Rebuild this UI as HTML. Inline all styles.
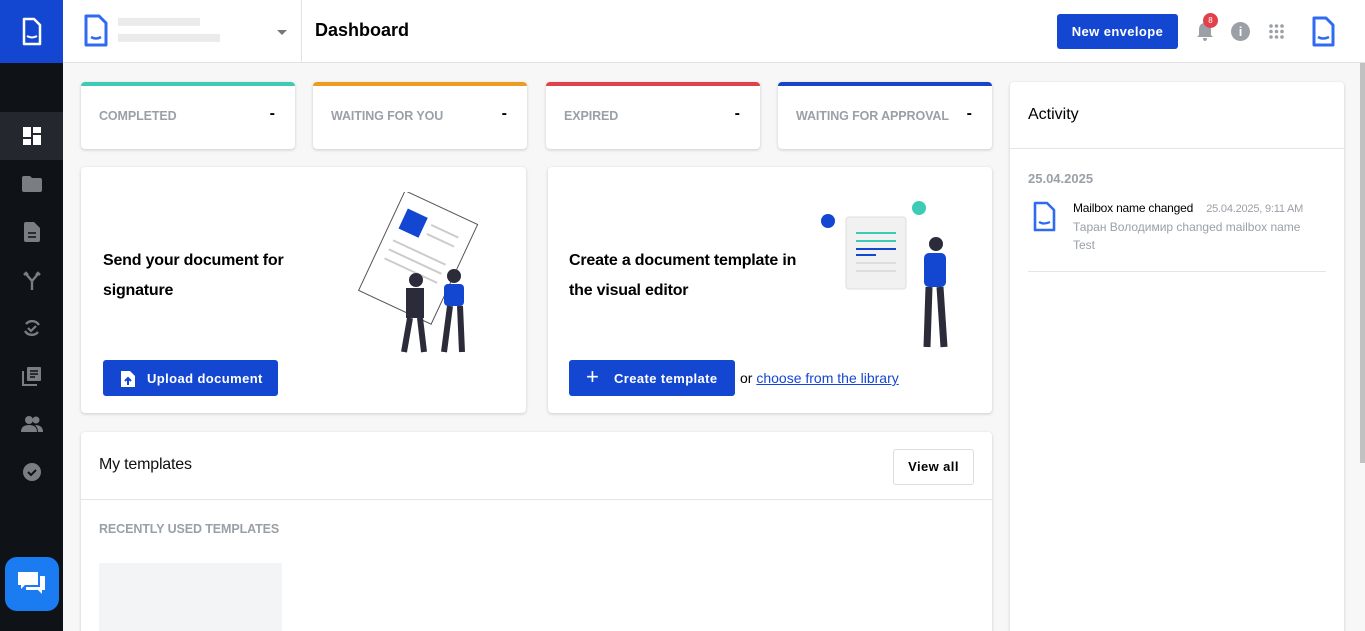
<!DOCTYPE html>
<html><head><meta charset="utf-8"><style>
*{box-sizing:border-box;margin:0;padding:0}
html{width:1365px;height:631px;overflow:hidden}
body{width:1365px;height:631px;overflow:hidden;background:#f7f7f7;font-family:"Liberation Sans","Noto Sans CJK SC",sans-serif;position:relative;color:#000}
.side{position:absolute;left:0;top:0;width:63px;height:631px;background:#0f1217}
.logo{position:absolute;left:0;top:0;width:63px;height:63px;background:#1447d1}
.nav{position:absolute;left:0;width:63px;height:48px;display:flex;align-items:center;justify-content:center}
.nav.act{background:#24272d}
.top{position:absolute;left:63px;top:0;right:0;height:63px;background:#fff;border-bottom:1px solid #e2e2e2}
.card{position:absolute;background:#fff;border-radius:4px;box-shadow:0 1px 3px rgba(0,0,0,.18)}
.stat{height:67px;top:82px;border-top:4px solid}
.stat .l{position:absolute;left:18px;top:23px;font-size:12.5px;color:#9aa0a8;font-weight:bold;letter-spacing:-.1px}
.stat .d{position:absolute;right:20px;top:19px;font-size:16px;font-weight:bold}
.btn{position:absolute;background:#1447d1;color:#fff;font-weight:bold;font-size:13px;border-radius:3px;display:flex;align-items:center;letter-spacing:.4px}
.h{font-size:16px;font-weight:bold;line-height:30px;letter-spacing:-.2px}
</style></head><body>
<div class="side">
 <div class="logo"><svg width="63" height="63"><path d="M24 19h10l6 6v19h-16z" fill="none" stroke="#fff" stroke-width="2.5" stroke-linejoin="round"/><path d="M27 36q5 3 10 0" stroke="#fff" stroke-width="2" fill="none"/></svg></div>
 <div class="nav act" style="top:112px"><svg width="18" height="18"><rect x="0" y="0" width="8" height="10" fill="#fff"/><rect x="10" y="0" width="8" height="6" fill="#fff"/><rect x="0" y="12" width="8" height="6" fill="#fff"/><rect x="10" y="8" width="8" height="10" fill="#fff"/></svg></div>
 <div class="nav" style="top:160px"><svg width="20" height="16"><path d="M0 2q0-2 2-2h6l2 2h8q2 0 2 2v10q0 2-2 2H2q-2 0-2-2z" fill="#7a7d82"/></svg></div>
 <div class="nav" style="top:208px"><svg width="16" height="20"><path d="M0 2q0-2 2-2h8l6 6v12q0 2-2 2H2q-2 0-2-2z" fill="#7a7d82"/><path d="M4 11h8M4 15h8" stroke="#0f1217" stroke-width="1.6"/></svg></div>
 <div class="nav" style="top:256px"><svg width="18" height="20"><path d="M9 20v-9L3 4M9 11l6-7M1 5l2-2 2 2M13 5l2-2 2 2" stroke="#7a7d82" stroke-width="2.4" fill="none"/></svg></div>
 <div class="nav" style="top:304px"><svg width="20" height="20"><path d="M4 6a8 8 0 0 1 13 1M16 14a8 8 0 0 1-13-1" stroke="#7a7d82" stroke-width="2.4" fill="none"/><path d="M6 10l3 3 5-5" stroke="#7a7d82" stroke-width="2.2" fill="none"/></svg></div>
 <div class="nav" style="top:352px"><svg width="20" height="20"><path d="M1 5v14h14" stroke="#7a7d82" stroke-width="2" fill="none"/><rect x="5" y="1" width="14" height="14" rx="1" fill="#7a7d82"/><path d="M8 5h8M8 8h8M8 11h5" stroke="#0f1217" stroke-width="1.4"/></svg></div>
 <div class="nav" style="top:400px"><svg width="22" height="16"><circle cx="8" cy="4" r="4" fill="#7a7d82"/><circle cx="15" cy="4" r="3.5" fill="#7a7d82"/><path d="M0 16q0-7 8-7t8 7zM14 9q8 0 8 7h-5q0-4-3-7" fill="#7a7d82"/></svg></div>
 <div class="nav" style="top:448px"><svg width="20" height="20"><circle cx="10" cy="10" r="9" fill="#7a7d82"/><path d="M6 10l3 3 5-5" stroke="#0f1217" stroke-width="2" fill="none"/></svg></div>
 <div style="position:absolute;left:5px;top:557px;width:54px;height:54px;border-radius:12px;background:#1a7cf0;display:flex;align-items:center;justify-content:center"><svg width="28" height="24"><path d="M0 0h20v13H7l-4 4v-4H0z" fill="#fff"/><path d="M22 4h5v14h-3v4l-4-4H8v-3h14z" fill="#fff"/></svg></div>
</div>
<div class="top">
 <svg style="position:absolute;left:20px;top:14px" width="26" height="34"><path d="M3 2h13l7 7v22H3z" fill="none" stroke="#2f6bf0" stroke-width="3" stroke-linejoin="round"/><path d="M8 23q5 3 10 0" stroke="#2f6bf0" stroke-width="2.5" fill="none"/></svg>
 <div style="position:absolute;left:55px;top:18px;width:82px;height:8px;background:#ebebeb"></div>
 <div style="position:absolute;left:55px;top:34px;width:102px;height:8px;background:#ebebeb"></div>
 <div style="position:absolute;left:214px;top:30px;border:5px solid transparent;border-top-color:#777"></div>
 <div style="position:absolute;left:238px;top:0;height:63px;border-left:1px solid #e2e2e2"></div>
 <div style="position:absolute;left:252px;top:20px;font-size:18px;font-weight:bold">Dashboard</div>
 <div class="btn" style="left:994px;top:14px;width:121px;height:35px;justify-content:center">New envelope</div>
 <svg style="position:absolute;left:1133px;top:22px" width="18" height="19"><path d="M9 1q-6 0-6 7v5l-2 2h16l-2-2V8q0-7-6-7zM7 16h4q0 3-2 3t-2-3" fill="#9aa0a6"/></svg>
 <div style="position:absolute;left:1140px;top:13px;width:15px;height:15px;border-radius:50%;background:#e0414a;color:#fff;font-size:8px;text-align:center;line-height:15px">8</div>
 <div style="position:absolute;left:1168px;top:22px;width:19px;height:19px;border-radius:50%;background:#9aa0a6;color:#fff;font-size:13px;font-weight:bold;text-align:center;line-height:19px">i</div>
 <svg style="position:absolute;left:1206px;top:24px" width="15" height="15" fill="#9aa0a6"><circle cx="2" cy="2" r="1.8"/><circle cx="7.5" cy="2" r="1.8"/><circle cx="13" cy="2" r="1.8"/><circle cx="2" cy="7.5" r="1.8"/><circle cx="7.5" cy="7.5" r="1.8"/><circle cx="13" cy="7.5" r="1.8"/><circle cx="2" cy="13" r="1.8"/><circle cx="7.5" cy="13" r="1.8"/><circle cx="13" cy="13" r="1.8"/></svg>
 <svg style="position:absolute;left:1248px;top:16px" width="26" height="32"><path d="M3 2h12l7 7v20H3z" fill="none" stroke="#2f6bf0" stroke-width="3" stroke-linejoin="round"/><path d="M7 21q5 3 11 0" stroke="#2f6bf0" stroke-width="2.5" fill="none"/></svg>
</div>
<div style="position:absolute;right:0;top:63px;width:5px;height:400px;background:#c1c1c1"></div>

<div class="card stat" style="left:81px;width:214px;border-color:#3ecbb5"><div class="l">COMPLETED</div><div class="d">-</div></div>
<div class="card stat" style="left:313px;width:214px;border-color:#ec9c20"><div class="l">WAITING FOR YOU</div><div class="d">-</div></div>
<div class="card stat" style="left:546px;width:214px;border-color:#e0414a"><div class="l">EXPIRED</div><div class="d">-</div></div>
<div class="card stat" style="left:778px;width:214px;border-color:#1844c8"><div class="l">WAITING FOR APPROVAL</div><div class="d">-</div></div>

<div class="card" style="left:81px;top:167px;width:445px;height:246px">
 <div class="h" style="position:absolute;left:22px;top:79px">Send your document for<br>signature</div>
 <svg style="position:absolute;left:275px;top:25px" width="150" height="165"><g transform="rotate(25 60 70)"><rect x="20" y="10" width="80" height="110" fill="#fff" stroke="#555" stroke-width="1"/><rect x="30" y="25" width="22" height="22" fill="#1447d1"/><path d="M58 30h30M58 40h30M30 60h58M30 70h58M30 80h58" stroke="#ccc" stroke-width="2"/></g><circle cx="60" cy="88" r="7" fill="#2b2b3a"/><rect x="50" y="96" width="18" height="30" fill="#2b2b3a"/><path d="M54 126l-6 34M64 126l4 34" stroke="#2b2b3a" stroke-width="6"/><circle cx="98" cy="84" r="7" fill="#2b2b3a"/><rect x="88" y="92" width="20" height="22" rx="4" fill="#1447d1"/><path d="M94 114l-6 46M104 114l2 46" stroke="#2b2b3a" stroke-width="6"/></svg>
 <div class="btn" style="left:22px;top:193px;width:175px;height:36px;padding-left:44px">Upload document</div>
 <svg style="position:absolute;left:40px;top:203px" width="14" height="17"><path d="M0 1h9l5 5v11H0z" fill="#fff"/><path d="M7 15V8M4 11l3-3 3 3" stroke="#1447d1" stroke-width="2" fill="none"/></svg>
</div>
<div class="card" style="left:548px;top:167px;width:444px;height:246px">
 <div class="h" style="position:absolute;left:21px;top:79px">Create a document template in<br>the visual editor</div>
 <svg style="position:absolute;left:270px;top:30px" width="160" height="160"><rect x="28" y="20" width="60" height="72" rx="3" fill="#f1f1f1" stroke="#ddd"/><path d="M38 36h40M38 44h40" stroke="#3ecbb5" stroke-width="2"/><path d="M38 52h40M38 58h20" stroke="#1447d1" stroke-width="2"/><path d="M38 66h40M38 74h40" stroke="#ddd" stroke-width="2"/><circle cx="10" cy="24" r="7" fill="#1447d1"/><circle cx="101" cy="11" r="7" fill="#3ecbb5"/><circle cx="118" cy="47" r="7" fill="#2b2b3a"/><rect x="106" y="56" width="22" height="34" rx="5" fill="#1447d1"/><path d="M111 90l-2 60M122 90l4 60" stroke="#2b2b3a" stroke-width="7"/></svg>
 <div class="btn" style="left:21px;top:193px;width:166px;height:36px;padding-left:45px">Create template</div>
 <div style="position:absolute;left:38px;top:200px;color:#fff;font-size:22px;line-height:20px">+</div>
 <div style="position:absolute;left:192px;top:203px;font-size:14px">or <span style="color:#1447d1;text-decoration:underline">choose from the library</span></div>
</div>
<div class="card" style="left:81px;top:432px;width:911px;height:220px">
 <div class="h" style="position:absolute;left:18px;top:18px;font-weight:normal;font-size:16px;color:#111">My templates</div>
 <div style="position:absolute;left:812px;top:17px;width:81px;height:36px;border:1px solid #ddd;border-radius:3px;font-size:13px;font-weight:bold;text-align:center;line-height:34px;letter-spacing:.4px">View all</div>
 <div style="position:absolute;left:0;right:0;top:67px;border-top:1px solid #e5e5e5"></div>
 <div style="position:absolute;left:18px;top:90px;font-size:12.5px;color:#9aa0a8;font-weight:bold;letter-spacing:-.1px">RECENTLY USED TEMPLATES</div>
 <div style="position:absolute;left:18px;top:131px;width:183px;height:90px;background:#f3f4f6"></div>
</div>
<div class="card" style="left:1010px;top:82px;width:334px;height:570px">
 <div style="position:absolute;left:18px;top:24px;font-size:16px">Activity</div>
 <div style="position:absolute;left:0;right:0;top:66px;border-top:1px solid #e5e5e5"></div>
 <div style="position:absolute;left:18px;top:89px;font-size:13px;color:#9aa0a8;font-weight:bold">25.04.2025</div>
 <svg style="position:absolute;left:22px;top:118px" width="26" height="34"><path d="M3 3h12l7 7v20H3z" fill="none" stroke="#2f6bf0" stroke-width="2.6" stroke-linejoin="round"/><path d="M7 22q5 3 11 0" stroke="#2f6bf0" stroke-width="2.3" fill="none"/></svg>
 <div style="position:absolute;left:63px;top:119px;font-size:12px;letter-spacing:-.2px">Mailbox name changed <span style="color:#9aa0a8;font-size:11px;margin-left:10px">25.04.2025, 9:11 AM</span></div>
 <div style="position:absolute;left:63px;top:136px;font-size:12px;color:#9aa0a8;line-height:18px">Таран Володимир changed mailbox name<br>Test</div>
 <div style="position:absolute;left:18px;right:18px;top:189px;border-top:1px solid #e5e5e5"></div>
</div>
</body></html>
